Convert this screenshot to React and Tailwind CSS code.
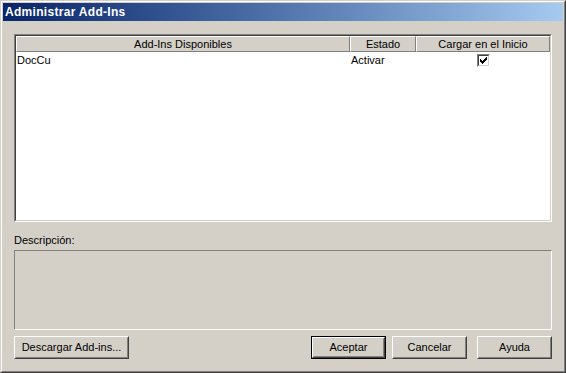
import React from "react";

const font = { fontFamily: '"Liberation Sans", Arial, sans-serif' };

// botón clásico estilo Windows 2000
function Boton({ children, ancho, porDefecto }) {
  const base = (
    <div className="h-full w-full border border-t-white border-l-white border-r-[#404040] border-b-[#404040] bg-[#d4d0c8]">
      <div className="flex h-full w-full items-center justify-center border border-t-[#d4d0c8] border-l-[#d4d0c8] border-r-[#808080] border-b-[#808080] text-[11px] text-black">
        {children}
      </div>
    </div>
  );
  if (porDefecto) {
    return <div className={`h-[23px] border border-black ${ancho}`}>{base}</div>;
  }
  return <div className={`h-[23px] ${ancho}`}>{base}</div>;
}

function Cabecera({ children, className }) {
  return (
    <div className={`flex h-[16px] items-center justify-center border-r border-r-[#808080] border-t border-t-white border-l border-l-white border-b border-b-[#808080] text-[11px] text-black ${className}`}>
      {children}
    </div>
  );
}

export default function App() {
  return (
    <div className="h-[373px] w-[566px] bg-[#d4d0c8]" style={font}>
      <div className="flex h-full w-full flex-col border border-t-[#d4d0c8] border-l-[#d4d0c8] border-r-[#404040] border-b-[#404040]">
        <div className="flex h-full w-full flex-col border border-t-white border-l-white border-r-[#808080] border-b-[#808080] p-px">
          {/* Barra de título */}
          <div className="flex h-[18px] items-center bg-gradient-to-r from-[#0a246a] to-[#a6caf0] pl-[2px] text-[12px] font-bold tracking-[0.3px] text-white">
            Administrar Add-Ins
          </div>

          <div className="flex flex-1 flex-col px-[11px]">
            {/* Lista de add-ins */}
            <div className="mt-[13px] h-[188px] border border-t-[#808080] border-l-[#808080] border-r-white border-b-white">
              <div className="h-full border border-t-[#404040] border-l-[#404040] border-r-[#d4d0c8] border-b-[#d4d0c8] bg-white">
                <div className="flex bg-[#d4d0c8]">
                  <Cabecera className="w-[334px]">Add-Ins Disponibles</Cabecera>
                  <Cabecera className="w-[66px]">Estado</Cabecera>
                  <Cabecera className="flex-1">Cargar en el Inicio</Cabecera>
                </div>
                <div className="flex h-[17px] items-center text-[11px] text-black">
                  <div className="w-[334px] pl-px">DocCu</div>
                  <div className="w-[66px] pl-px">Activar</div>
                  <div className="flex flex-1 items-center pl-[61px]">
                    <div className="flex h-[13px] w-[13px] items-center justify-center border border-t-[#808080] border-l-[#808080] border-r-white border-b-white">
                      <div className="flex h-full w-full items-center justify-center border border-t-[#404040] border-l-[#404040] border-r-[#d4d0c8] border-b-[#d4d0c8] bg-white">
                        <svg width="7" height="7" viewBox="0 0 7 7">
                          <path d="M0 2h1v1h1v1h1V3h1V2h1V1h1V0h1v3H6v1H5v1H4v1H3v1H2V6H1V5H0z" fill="#000" />
                        </svg>
                      </div>
                    </div>
                  </div>
                </div>
              </div>
            </div>

            {/* Descripción */}
            <div className="mt-[12px] text-[11px] leading-[13px] text-black">Descripción:</div>
            <div className="mt-[3px] h-[80px] border border-t-[#808080] border-l-[#808080] border-r-white border-b-white" />

            {/* Botones */}
            <div className="mt-[6px] flex items-start">
              <Boton ancho="w-[115px]">Descargar Add-ins...</Boton>
              <div className="flex-1" />
              <Boton ancho="w-[75px]" porDefecto>Aceptar</Boton>
              <div className="w-[6px]" />
              <Boton ancho="w-[75px]">Cancelar</Boton>
              <div className="w-[10px]" />
              <Boton ancho="w-[75px]">Ayuda</Boton>
            </div>
          </div>
        </div>
      </div>
    </div>
  );
}
